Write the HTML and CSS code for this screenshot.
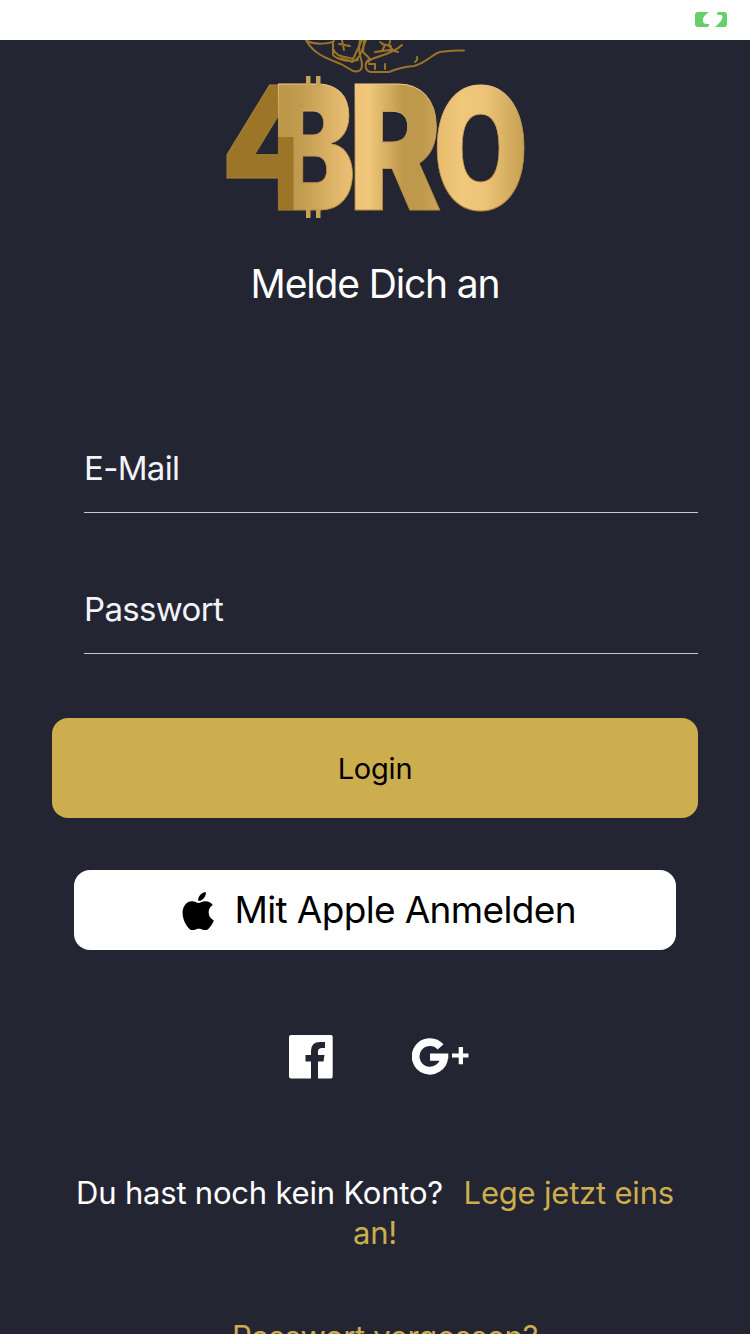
FILE: index.html
```html
<!DOCTYPE html>
<html lang="de">
<head>
<meta charset="utf-8">
<title>4BRO</title>
<link rel="stylesheet" href="styles.css">
</head>
<body>
<div class="screen">
  <header class="status-bar">
    <svg class="battery" viewBox="695 12 32 15">
      <path d="M698 12H709C704 15 702 19 703 22C704 24 706 24 709.500 24L708 27H698Q695 27 695 24V15Q695 12 698 12Z"/>
      <path d="M717.500 12H724Q727 12 727 15V24Q727 27 724 27H715C720 23 724 18 722 15.500Q721 14.500 717 15Z"/>
    </svg>
  </header>
  <main class="content">
    <svg class="logo" viewBox="225 40 300 180" role="img" aria-label="4BRO">
      <defs>
        <linearGradient id="bee"><stop offset="0" stop-color="#bb9547"/><stop offset=".35" stop-color="#c19c50"/><stop offset=".85" stop-color="#e6bb6f"/><stop offset="1" stop-color="#e9bf73"/></linearGradient>
        <linearGradient id="arr"><stop offset="0" stop-color="#edc377"/><stop offset=".22" stop-color="#f0c77b"/><stop offset=".58" stop-color="#bf994b"/><stop offset=".78" stop-color="#bf994b"/><stop offset="1" stop-color="#cda65a"/></linearGradient>
        <linearGradient id="oh"><stop offset="0" stop-color="#e5ba6d"/><stop offset=".3" stop-color="#f0c77b"/><stop offset=".55" stop-color="#edc377"/><stop offset="1" stop-color="#c29c4f"/></linearGradient>
        <linearGradient id="edge" x2="0" y2="1"><stop offset=".15" stop-color="#f6d38c"/><stop offset=".4" stop-color="#c9a053"/><stop offset=".85" stop-color="#b5863a"/></linearGradient>
        <clipPath id="left"><rect x="220" y="80" width="60" height="135"/></clipPath>
      </defs>
      <g class="hands">
        <path d="M306 40C314 55 329 59 341 64L353 71Q362 73 362 65C362 57 357 55 360 40"/>
        <path d="M307 41C315 45 329 44 334 41M333 43V55C337 60 345 58 352 62C361 58 360 54 366 40M333 49C337 58 345 56 353 59L362 40M334 56Q343 63 358 60M342 40L344 50M339 44L350 46"/>
        <path d="M364 40L363 52L370 59C364 62 364 71 371 72H389C399 68 403 67 414 66C428 62 432 54 440 52Q450 50 464 50.500"/>
        <path d="M368 62C374 55 389 57 402 45M375 52L390 50L398 52M380 42L385 45L382 51M390 41L389 46L394 51M382 44L391 46M369 64L375 64V69M385 64L385 69M415 62Q418 60 417 57"/>
      </g>
      <g class="wordmark">
        <g clip-path="url(#left)"><text class="four" transform="translate(221 194.500) scale(.84 .877)">4</text></g>
        <text fill="url(#bee)" transform="translate(272.500 209.500) scale(.717 1)">B</text>
        <text fill="url(#arr)" transform="translate(348.500 209.500) scale(.805 1)">R</text>
        <text fill="url(#oh)" transform="translate(433 208.500) scale(.71 .975)">O</text>
      </g>
      <rect class="fold" x="278" y="137" width="15.500" height="73"/>
      <path class="ticks" d="M306 76h4.500v10h-4.500zM316 76h4.500v10h-4.500zM306 208h4.500v10h-4.500zM316 208h4.500v10h-4.500z"/>
    </svg>
    <h1 class="title">Melde Dich an</h1>
    <form class="form">
      <label class="field">E-Mail</label>
      <label class="field">Passwort</label>
      <button class="login" type="button"><span>Login</span></button>
      <button class="apple" type="button">
        <svg class="apple-icon" viewBox="0 0 24 24"><path d="M12.152 6.896c-.948 0-2.415-1.078-3.96-1.04-2.04.027-3.91 1.183-4.961 3.014-2.117 3.675-.546 9.103 1.519 12.09 1.013 1.454 2.208 3.09 3.792 3.039 1.52-.065 2.09-.987 3.935-.987 1.831 0 2.35.987 3.96.948 1.637-.026 2.676-1.48 3.676-2.948 1.156-1.688 1.636-3.325 1.662-3.415-.039-.013-3.182-1.221-3.22-4.857-.026-3.04 2.48-4.494 2.597-4.559-1.429-2.09-3.623-2.324-4.39-2.376-2-.156-3.675 1.09-4.61 1.09zM15.53 3.83c.843-1.012 1.4-2.427 1.245-3.83-1.207.052-2.662.805-3.532 1.818-.78.896-1.454 2.338-1.273 3.714 1.338.104 2.715-.688 3.559-1.701"/></svg>
        <span>Mit Apple Anmelden</span>
      </button>
    </form>
    <div class="social">
      <svg class="facebook" viewBox="289 1035 44 44"><path d="M291 1035H331Q332.700 1035 332.700 1037V1076.500Q332.700 1078.500 331 1078.500H318V1061.500H323.500L324.500 1055H318V1051.500Q318 1048 322 1048H325V1042H320Q311 1042 311 1051V1055H305.500V1061.500H311V1078.500H291Q289 1078.500 289 1076.500V1037Q289 1035 291 1035Z"/></svg>
      <svg class="google" viewBox="412 1034.500 57 44"><path class="ring" d="M440.600 1046.300A14.300 14.300 0 1 0 444.200 1057"/><path d="M430 1053H448.300V1058L444 1060.200H430ZM458.700 1046.500H463V1053H468.500V1057H463V1063.800H458.700V1057H452V1053H458.700Z"/></svg>
    </div>
    <p class="signup">Du hast noch kein Konto? <a class="link">Lege jetzt eins an!</a></p>
    <a class="forgot">Passwort vergessen?</a>
  </main>
</div>
</body>
</html>
```

FILE: styles.css
```css
* { box-sizing: border-box; }
body { margin: 0; font-family: Inter, "Liberation Sans", sans-serif; background: #242532; }
svg { display: block; }
.screen { width: 750px; height: 1334px; overflow: hidden; background: #242532; color: #fff; }
.status-bar { height: 40px; background: #fff; display: flex; justify-content: flex-end; padding: 12px 23px 0 0; }
.battery { width: 32px; height: 15px; fill: #65cf69; }
.content { display: flex; flex-direction: column; align-items: center; }
.logo { width: 300px; height: 180px; }
.hands path { fill: none; stroke: #9b7428; stroke-width: 2; stroke-linecap: round; stroke-linejoin: round; }
.wordmark { font-family: Inter, sans-serif; font-weight: 900; font-size: 173px; }
.wordmark text { stroke: url(#edge); stroke-width: 1; }
.wordmark .four { fill: #9c7529; stroke: #aa8337; }
.fold { fill: #9c7529; }
.ticks { fill: #c9a25a; }
.title { margin: 40px 0 0; font-size: 39px; line-height: 48px; font-weight: 400; letter-spacing: -1.15px; }
.form { width: 646px; margin-top: 118px; display: flex; flex-direction: column; align-items: center; }
.field { width: 614px; height: 87px; align-self: flex-end; margin-bottom: 54px; border-bottom: 1px solid #c9c9cc; font-size: 33px; line-height: 84px; color: #f3f4f9; letter-spacing: -.65px; }
.field + .login { margin-top: 10px; }
button { border: 0; padding: 0; font-family: inherit; color: #000; display: flex; align-items: center; justify-content: center; }
.login { width: 646px; height: 100px; border-radius: 16px; background: #ccae4e; font-size: 29px; letter-spacing: -.2px; }
.apple { width: 602px; height: 80px; margin-top: 52px; padding-left: 5px; border-radius: 16px; background: #fff; font-size: 37px; letter-spacing: -.65px; gap: 17px; }
.apple span { padding-bottom: 2px; }
.apple-icon { width: 38.4px; height: 38.4px; margin-top: 2px; }
.social { display: flex; gap: 79px; margin-top: 85px; padding-left: 7px; }
.social svg { fill: #fff; height: 44px; }
.facebook { width: 44px; }
.google { width: 57px; }
.google .ring { fill: none; stroke: #fff; stroke-width: 7.8; }
.signup { width: 640px; margin: 94px 0 0; text-align: center; font-size: 31px; line-height: 40px; letter-spacing: -.2px; }
.link { margin-left: 12px; }
.link, .forgot { color: #ccae4e; }
.forgot { margin-top: 64px; font-size: 31px; line-height: 40px; padding-left: 20px; white-space: nowrap; letter-spacing: -.33px; }
```
